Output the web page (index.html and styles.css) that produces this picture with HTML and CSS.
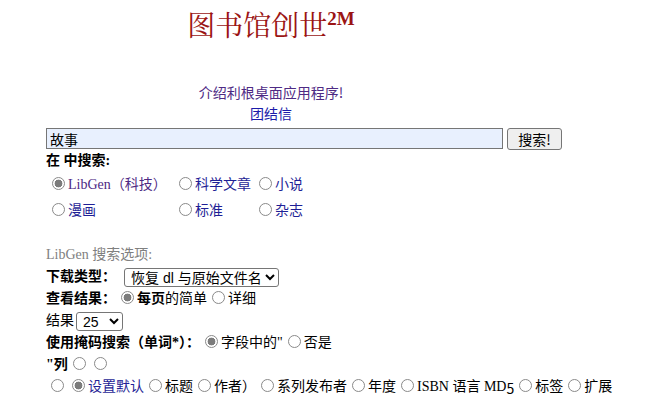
FILE: index.html
```html
<!DOCTYPE html>
<html lang="zh">
<head>
<meta charset="utf-8">
<title>图书馆创世</title>
<link rel="stylesheet" href="styles.css">
</head>
<body>
<div class="page">
  <div class="head">
    <h1 class="title">图书馆创世<sup class="sup">2M</sup></h1>
    <div class="intro"><a class="visited" href="#">介绍利根桌面应用程序!</a></div>
    <div class="intro2"><a class="link" href="#">团结信</a></div>
  </div>
  <form class="search">
    <input class="query" type="text" value="故事">
    <button class="go" type="button">搜索!</button>
  </form>
  <div class="label bold">在 中搜索:</div>
  <table class="where">
    <tr>
      <td><input class="r" type="radio" name="w" checked><span class="visited serif">LibGen</span><span class="visited">（科技）</span></td>
      <td><input class="r" type="radio" name="w"><span class="navy">科学文章</span></td>
      <td><input class="r" type="radio" name="w"><span class="navy">小说</span></td>
    </tr>
    <tr>
      <td><input class="r" type="radio" name="w"><span class="navy">漫画</span></td>
      <td><input class="r" type="radio" name="w"><span class="navy">标准</span></td>
      <td><input class="r" type="radio" name="w"><span class="navy">杂志</span></td>
    </tr>
  </table>
  <div class="opts"><span class="serif">LibGen</span> 搜索选项:</div>
  <div class="srow"><span class="bold">下载类型：</span><select class="sel wide"><option>恢复 dl 与原始文件名</option></select></div>
  <div class="row"><span class="bold">查看结果：</span><input class="r" type="radio" name="v" checked><span class="semi">每页</span>的简单<input class="r" type="radio" name="v">详细</div>
  <div class="srow"><span>结果</span><select class="sel small"><option>25</option></select></div>
  <div class="row"><span class="bold">使用掩码搜索（单词*）：</span><input class="r" type="radio" name="m" checked>字段中的"<input class="r" type="radio" name="m">否是</div>
  <div class="row"><span class="bold">"列</span><input class="r" type="radio" name="c"><input class="r" type="radio" name="c"></div>
  <div class="row"><input class="r" type="radio" name="f"><input class="r" type="radio" name="f" checked><span class="navy">设置默认</span><input class="r" type="radio" name="f">标题<input class="r" type="radio" name="f">作者）<input class="r" type="radio" name="f">系列发布者<input class="r" type="radio" name="f">年度<input class="r" type="radio" name="f"><span class="serif">ISBN</span> 语言 <span class="serif">MD</span><span class="sub">5</span><input class="r" type="radio" name="f">标签<input class="r" type="radio" name="f">扩展</div>
</div>
</body>
</html>
```
FILE: styles.css
```css
html, body {
  margin: 0;
  padding: 0;
  background: #fff;
}
body {
  font-family: "Liberation Serif", "Noto Sans CJK SC", serif;
  font-size: 14px;
  color: #000;
}
.page {
  padding-left: 46px;
  width: 580px;
}
.head {
  width: 450px;
  text-align: center;
  padding-top: 9px;
}
.title {
  margin: 0;
  height: 36px;
  font-family: "Liberation Serif", "Noto Serif CJK SC", "Noto Sans CJK SC", serif;
  font-weight: normal;
  font-size: 28px;
  line-height: 36px;
  color: #9b1414;
}
.sup {
  font-size: 19px;
  font-weight: bold;
  vertical-align: 11px;
  line-height: 0;
}
.intro {
  margin-top: 36px;
  height: 22px;
  line-height: 22px;
  font-family: "Noto Sans CJK SC", sans-serif;
}
.intro2 {
  height: 21px;
  line-height: 21px;
  font-family: "Noto Sans CJK SC", sans-serif;
}
a { text-decoration: none; }
.visited { color: #4e2a84; }
.link { color: #1b1baa; }
.navy { color: #1f1f96; }
.search {
  display: flex;
  gap: 4px;
  margin: 4px 0 0 0;
  align-items: flex-start;
  height: 22px;
}
.query {
  box-sizing: border-box;
  width: 457px;
  height: 21px;
  margin: 0;
  padding: 0 3px;
  border: 1px solid #767676;
  background: #e8f0fe;
  font-family: "Noto Sans CJK SC", sans-serif;
  font-size: 14px;
}
.go {
  box-sizing: border-box;
  width: 55px;
  height: 22px;
  margin: 0;
  padding: 0;
  border: 1px solid #767676;
  border-radius: 3px;
  background: #efefef;
  font-family: "Noto Sans CJK SC", sans-serif;
  font-size: 14px;
  line-height: 18px;
  color: #000;
}
.bold { font-weight: bold; }
.semi { font-weight: bold; }
.label {
  height: 22px;
  line-height: 22px;
}
.where {
  border-collapse: collapse;
  table-layout: fixed;
  width: 320px;
}
.where td {
  padding: 0 0 0 1px;
  height: 26px;
  line-height: 26px;
  white-space: nowrap;
  overflow: visible;
}
.where td:first-child { width: 126px; }
.where td:nth-child(2) { width: 79px; }
.serif { font-family: "Liberation Serif", serif; }
.opts {
  color: #808080;
  margin-top: 20px;
  height: 22px;
  line-height: 22px;
}
.row {
  height: 22px;
  line-height: 22px;
  white-space: nowrap;
}
.srow {
  display: flex;
  align-items: center;
  height: 22px;
  line-height: 22px;
  white-space: nowrap;
}
.r {
  -webkit-appearance: none;
  appearance: none;
  box-sizing: border-box;
  width: 13px;
  height: 13px;
  margin: 3px 3px 0 5px;
  border: 1px solid #8a8a8a;
  border-radius: 50%;
  background: #fff;
  vertical-align: -1px;
}
.r:checked {
  background: radial-gradient(circle, #7c7c7c 0 3.6px, #fff 4.2px);
}
.sel {
  box-sizing: border-box;
  height: 19px;
  margin: 0;
  border: 1px solid #767676;
  border-radius: 3px;
  background: #fff;
  font-family: "Liberation Sans", "Noto Sans CJK SC", sans-serif;
  font-size: 14px;
  line-height: 16px;
  color: #000;
  padding: 0 0 0 2px;
}
.wide { width: 155px; margin-left: 8px; }
.small { width: 47px; margin-left: 2px; }
.sub {
  font-family: "Noto Sans CJK SC", sans-serif;
  vertical-align: -3px;
  line-height: 0;
}
```
